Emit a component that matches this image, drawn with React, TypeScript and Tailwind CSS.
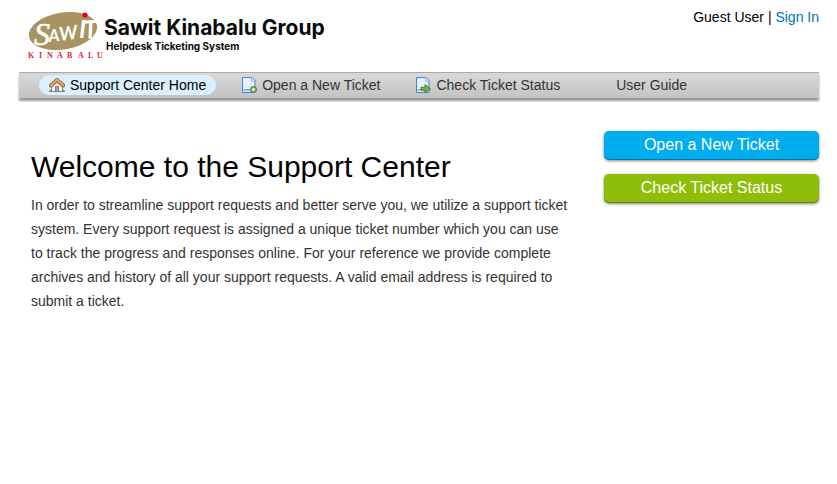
import type { ReactNode } from "react";

function Logo() {
  return (
    <svg width="310" height="56" viewBox="0 0 310 56" role="img" aria-label="Sawit Kinabalu Group">
      <ellipse cx="44" cy="25" rx="34.500" ry="18.500" fill="#a89461" transform="rotate(-9 44 25)" />
      <g fill="#ffffff" fontFamily="Lato, sans-serif" fontWeight="700">
        <text fontSize="32" fontStyle="italic" fontFamily="'Liberation Serif', serif" fontWeight="400" stroke="#ffffff" strokeWidth=".6" transform="translate(15 39)">S</text>
        <text fontSize="17" fontStyle="italic" transform="translate(30 36) rotate(-6)">A</text>
        <text fontSize="19" fontStyle="italic" transform="translate(41 35) rotate(-8)">W</text>
        <text fontSize="25" fontStyle="italic" transform="translate(60 32)">I</text>
        <text fontSize="25" fontStyle="italic" transform="translate(65 33) rotate(-4)">T</text>
      </g>
      <circle cx="66" cy="9" r="2.600" fill="#e4002b" />
      <text
        x="9 20 28 38 48 59 69 78"
        y="52"
        fontSize="8"
        fontWeight="700"
        fontFamily="'Liberation Serif', serif"
        fill="#dc2a45"
      >
        KINABALU
      </text>
      <text x="85" y="29" fontSize="21" fontWeight="700" fontFamily="Inter, sans-serif" fill="#0a0a0a">
        Sawit Kinabalu Group
      </text>
      <text x="87" y="44" fontSize="10" fontWeight="700" fontFamily="Inter, sans-serif" fill="#0a0a0a">
        Helpdesk Ticketing System
      </text>
    </svg>
  );
}

function HomeIcon() {
  return (
    <svg width="16" height="16" viewBox="0 0 16 16" aria-hidden="true">
      <path d="M0 15c0-3 3-3.500 5 0zM11 15c1-3.500 5-3 5 0z" fill="#5fa04a" />
      <path d="M2.500 8.500 8 3.500l5.500 5v6h-11z" fill="#f4f1ec" stroke="#8b8279" />
      <path d="M6.500 9.500h3v5h-3z" fill="#a3a4a8" stroke="#6f6f73" strokeWidth=".8" />
      <path d="M1.800 8.500 8 3l6.200 5.500" fill="none" stroke="#955c28" strokeWidth="3.800" strokeLinejoin="round" strokeLinecap="round" />
      <path d="M1.800 8.300 8 2.900l6.200 5.400" fill="none" stroke="#dfa45e" strokeWidth="2.200" strokeLinejoin="round" strokeLinecap="round" />
    </svg>
  );
}

function PageIcon({ children }: { children: ReactNode }) {
  return (
    <svg width="16" height="16" viewBox="0 0 16 16" aria-hidden="true">
      <path d="M1.500.5h9.500l3 3v12H1.500z" fill="#c9e1f9" stroke="#4b88c7" strokeLinejoin="round" />
      <path d="M2.500 1.500h7.500v3h3v6H2.500z" fill="#e6f2ff" />
      <path d="M10.500.5v3.500H14z" fill="#ffffff" stroke="#77a9dc" strokeWidth=".8" />
      <path d="M2.500 11.500h8" stroke="#ffffff" />
      <path d="M2.500 12.700h8" stroke="#5f9fe0" strokeWidth="1.200" />
      {children}
    </svg>
  );
}

function NewTicketIcon() {
  return (
    <PageIcon>
      <circle cx="12.500" cy="12.500" r="3" fill="#74a94a" stroke="#3f7a20" strokeWidth=".9" />
      <path d="M12.500 10.800v3.400M10.800 12.500h3.400" stroke="#ffffff" strokeWidth="1.300" />
    </PageIcon>
  );
}

function StatusIcon() {
  return (
    <PageIcon>
      <path d="M6 10.300h4V7.500l5.500 4.200-5.500 4v-2.500H6z" fill="#77b34a" stroke="#3f7a20" strokeWidth=".9" strokeLinejoin="round" />
    </PageIcon>
  );
}

const navItems = [
  { label: "Support Center Home", href: "#home", Icon: HomeIcon, active: true },
  { label: "Open a New Ticket", href: "#open", Icon: NewTicketIcon, active: false },
  { label: "Check Ticket Status", href: "#status", Icon: StatusIcon, active: false },
  { label: "User Guide", href: "#guide", Icon: null, active: false },
];

export default function App() {
  return (
    <div className="min-h-screen bg-white pr-[18px] pl-[19px] font-['Liberation_Sans',Arial,sans-serif] text-sm text-black">
      {/* Header */}
      <header className="flex h-[72px] items-start justify-between">
        <a href="#home" className="pt-1.5">
          <Logo />
        </a>
        <p className="pt-[7px] leading-5">
          Guest User | <a href="#login" className="text-[#0072bc]">Sign In</a>
        </p>
      </header>

      {/* Navigation */}
      <nav className="border-t border-[#aaaaaa] bg-linear-to-b from-[#d8d8d8] to-[#c3c3c3] px-5 pt-0.5 pb-[3px] shadow-[0_3px_2px_rgba(0,0,0,0.4)]">
        <ul className="flex flex-wrap gap-[15px]">
          {navItems.map(({ label, href, Icon, active }) => (
            <li key={label}>
              <a
                href={href}
                className={
                  active
                    ? "flex h-5 items-center rounded-full bg-[#dbefff] px-2.5 text-black"
                    : "flex h-5 items-center rounded-full px-2.5 text-[#333333]"
                }
              >
                <span className="mr-[5px] w-4">{Icon && <Icon />}</span>
                {label}
              </a>
            </li>
          ))}
        </ul>
      </nav>

      {/* Content */}
      <main className="flex items-start justify-between gap-6 pt-[33px]">
        <div className="max-w-[552px] flex-1 pt-[18px] pl-3">
          <h1 className="text-[30px] leading-9">Welcome to the Support Center</h1>
          <p className="mt-2 leading-6 text-[#333333]">
            In order to streamline support requests and better serve you, we utilize a support ticket
            system. Every support request is assigned a unique ticket number which you can use to track
            the progress and responses online. For your reference we provide complete archives and
            history of all your support requests. A valid email address is required to submit a ticket.
          </p>
        </div>

        <aside className="flex w-[215px] flex-col gap-3.5 text-center text-base text-white">
          <a href="#open" className="h-[29px] rounded-[5px] bg-[#00aeef] leading-7 shadow-[0_1px_3px_rgba(0,0,0,0.5),inset_0_-1px_1px_rgba(0,0,0,0.3)]">
            Open a New Ticket
          </a>
          <a href="#status" className="h-[29px] rounded-[5px] bg-[#8fbe08] leading-7 shadow-[0_1px_3px_rgba(0,0,0,0.5),inset_0_-1px_1px_rgba(0,0,0,0.3)]">
            Check Ticket Status
          </a>
        </aside>
      </main>
    </div>
  );
}
